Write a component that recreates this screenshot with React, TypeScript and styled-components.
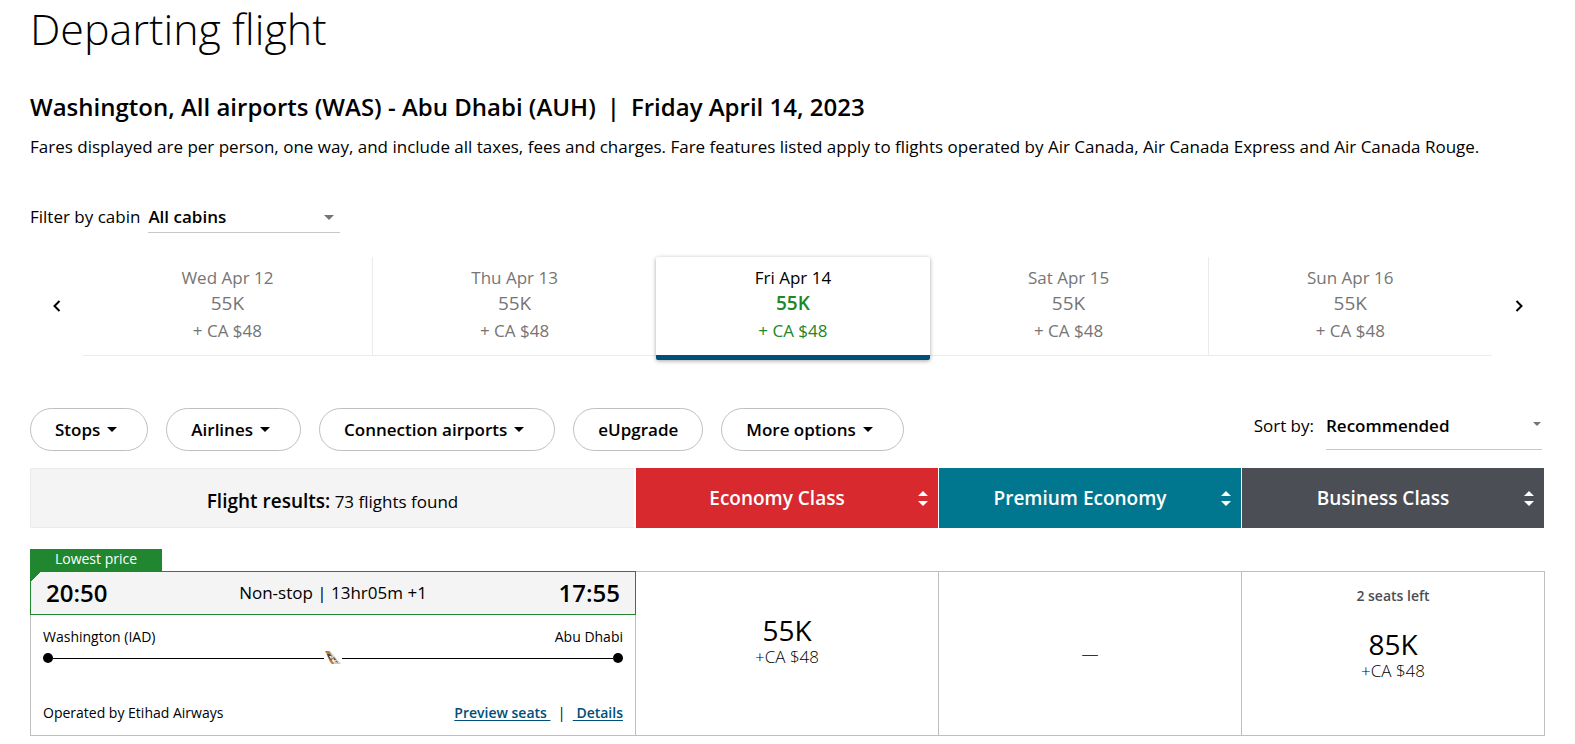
import React from "react";
import styled, { createGlobalStyle, css } from "styled-components";

const GlobalStyle = createGlobalStyle`
  *, *::before, *::after { box-sizing: border-box; }
  body {
    margin: 0;
    background: #fff;
    color: #000;
    font: 400 17px/24px "Open Sans", sans-serif;
  }
  button, select { font: inherit; color: inherit; }
`;

const Page = styled.main`
  padding: 0 30px 8px;
`;

const Title = styled.h1`
  margin: 0;
  font-size: 43px;
  line-height: 58px;
  font-weight: 300;
`;

const Route = styled.h2`
  margin: 33px 0 0;
  font-size: 24px;
  line-height: 32px;
  font-weight: 600;
`;

const RouteDivider = styled.span`
  margin: 0 11px;
`;

const Notice = styled.p`
  margin: 12px 0 0;
`;

const CabinFilter = styled.div`
  display: flex;
  align-items: flex-start;
  gap: 8px;
  margin-top: 46px;
`;

const SelectBox = styled.div<{ $width: number; $height: number }>`
  position: relative;
  width: ${(p) => p.$width}px;
  height: ${(p) => p.$height}px;
  border-bottom: 1px solid #c8c8c8;
`;

const Select = styled.select`
  display: block;
  width: 100%;
  height: 24px;
  padding: 0;
  border: 0;
  outline: 0;
  background: transparent;
  appearance: none;
  font-weight: 600;
`;

const SelectArrow = styled.svg<{ $top: number; $right: number }>`
  position: absolute;
  top: ${(p) => p.$top}px;
  right: ${(p) => p.$right}px;
  fill: #757575;
  pointer-events: none;
`;

const Calendar = styled.nav`
  display: flex;
  align-items: center;
  margin-top: 24px;
`;

const ArrowButton = styled.button`
  flex: none;
  display: flex;
  justify-content: center;
  width: 53px;
  padding: 8px 0 10px;
  border: 0;
  background: none;
`;

const Days = styled.div`
  flex: 1;
  display: flex;
  height: 99px;
  border-bottom: 1px solid #ebebeb;
`;

const Day = styled.button<{ $selected?: boolean; $divider?: boolean }>`
  flex: 1 1 auto;
  display: flex;
  flex-direction: column;
  align-items: center;
  height: 98px;
  padding: 8px 0 0;
  border: 0;
  border-right: ${(p) => (p.$divider ? "1px solid #ebebeb" : "0")};
  background: #fff;
  color: #757575;
  ${(p) =>
    p.$selected &&
    css`
      z-index: 1;
      height: 103px;
      border-bottom: 5px solid #004f7a;
      border-radius: 2px;
      box-shadow: 0 1px 4px rgba(0, 0, 0, 0.35);
      color: #218726;
    `}
`;

const DayName = styled.span<{ $selected?: boolean }>`
  line-height: 25px;
  ${(p) => p.$selected && "color: #000;"}
`;

const DayPoints = styled.span<{ $selected?: boolean }>`
  font-size: 19px;
  line-height: 27px;
  font-weight: ${(p) => (p.$selected ? 600 : 400)};
`;

const DayFee = styled.span`
  line-height: 27px;
`;

const Toolbar = styled.div`
  display: flex;
  justify-content: space-between;
  margin-top: 52px;
`;

const Pills = styled.div`
  display: flex;
  gap: 18px;
`;

const Pill = styled.button`
  display: flex;
  align-items: center;
  gap: 7px;
  height: 43px;
  padding: 0 24px;
  border: 1px solid #bfbfbf;
  border-radius: 22px;
  background: #fff;
  font-weight: 600;
`;

const PillArrow = styled.svg`
  margin-right: 6px;
`;

const Sort = styled.div`
  display: flex;
  gap: 12px;
  margin-right: 3px;
  padding-top: 6px;
`;

const Results = styled.table`
  width: 100%;
  margin-top: 17px;
  border-collapse: separate;
  border-spacing: 0;
  table-layout: fixed;
`;

const SummaryHead = styled.th`
  width: 40%;
  height: 60px;
  padding: 6px 0 0;
  border: 1px solid #ebebeb;
  border-right: 2px solid #fff;
  background: #f4f4f4;
  font-weight: 400;
`;

const SummaryLabel = styled.strong`
  font-size: 19px;
  font-weight: 600;
`;

const ClassHead = styled.th<{ $color: string }>`
  height: 60px;
  padding: 0;
  border-right: 1px solid #fff;
  background: ${(p) => p.$color};
  background-clip: padding-box;
`;

const ClassButton = styled.button`
  display: flex;
  align-items: center;
  width: 100%;
  height: 60px;
  padding: 0 10px 0 0;
  border: 0;
  background: none;
  color: #fff;
  font-size: 19px;
  font-weight: 600;
`;

const ClassName = styled.span`
  flex: 1;
`;

const BadgeCell = styled.td`
  height: 43px;
  padding: 0;
  vertical-align: bottom;
`;

const Badge = styled.div`
  width: 132px;
  height: 22px;
  background: #218630;
  color: #fff;
  font-size: 14px;
  line-height: 20px;
  text-align: center;
`;

const FlightCell = styled.td`
  height: 165px;
  padding: 0;
  border: solid #bfbfbf;
  border-width: 0 1px 1px;
  vertical-align: top;
`;

const Times = styled.div`
  display: flex;
  align-items: center;
  justify-content: space-between;
  height: 44px;
  margin: 0 -1px;
  padding: 0 15px;
  border: 1px solid #218630;
  background: linear-gradient(135deg, #218630 7px, #f4f4f4 7px);
`;

const Time = styled.strong`
  font-size: 24px;
  font-weight: 600;
`;

const FlightBody = styled.div`
  padding: 12px;
  font-size: 14px;
  line-height: 20px;
`;

const Between = styled.div`
  display: flex;
  justify-content: space-between;
`;

const Track = styled.div`
  display: flex;
  align-items: center;
  height: 14px;
  margin: 4px 0 38px;
`;

const Dot = styled.i`
  width: 10px;
  height: 10px;
  border-radius: 50%;
  background: #000;
`;

const Line = styled.i`
  flex: 1;
  height: 1px;
  background: #000;
`;

const Links = styled.span`
  white-space: pre;
`;

const Link = styled.a`
  color: #004f7a;
  font-weight: 600;
  text-underline-offset: 2px;
`;

const PriceCell = styled.td<{ $top: number }>`
  padding: ${(p) => p.$top}px 0 0;
  border: solid #bfbfbf;
  border-width: 1px 1px 1px 0;
  text-align: center;
  vertical-align: top;
`;

const EmptyCell = styled.td`
  padding: 0;
  border: solid #bfbfbf;
  border-width: 1px 1px 1px 0;
  color: #333;
  font-weight: 300;
  text-align: center;
`;

const SeatsLeft = styled.div`
  margin-bottom: 22px;
  color: #4b4e55;
  font-size: 14px;
  line-height: 20px;
  font-weight: 600;
`;

const Points = styled.div`
  margin-bottom: 1px;
  font-size: 28px;
  line-height: 32px;
`;

const Fee = styled.div`
  line-height: 20px;
  font-weight: 300;
`;

const Triangle = () => (
  <PillArrow width="10" height="5" viewBox="0 0 10 5" aria-hidden="true">
    <path d="M0 0h10L5 5z" />
  </PillArrow>
);

const Chevron = ({ flip }: { flip?: boolean }) => (
  <svg width="8" height="12" viewBox="0 0 8 12" fill="none" stroke="#000" strokeWidth="2" aria-hidden="true">
    <path d={flip ? "M1.500 1l5 5-5 5" : "M6.500 1l-5 5 5 5"} />
  </svg>
);

const SortIcon = () => (
  <svg width="10" height="17" viewBox="0 0 10 17" fill="#fff" aria-hidden="true">
    <path d="M0 6L5 1l5 5zM0 11h10l-5 5z" />
  </svg>
);

const TailLogo = () => (
  <svg width="18" height="14" viewBox="0 0 18 14" role="img" aria-label="Etihad Airways">
    <path d="M1 0h5l11 13H8C5 10 3 5 1 0z" fill="#d3ccc0" />
    <path d="M1 0h4l2 3-3 1zM4 6l3 2 3 5H8C6 11 5 9 4 6z" fill="#c07a22" />
    <path d="M3 3l3 0 2 2-1 1 2 2-2 1-3-3z" fill="#54403c" />
    <path d="M5 5l2 0 1 2-1 1z" fill="#efe9df" />
    <path d="M9 6l2 1 1 2-2-0zM11 10l2 0 1 2z" fill="#6b5648" />
    <path d="M8 8l2 1 1 2-2 0z" fill="#f4efe7" />
  </svg>
);

const days = ["Wed Apr 12", "Thu Apr 13", "Fri Apr 14", "Sat Apr 15", "Sun Apr 16"];
const SELECTED = 2;

const filters = [
  { label: "Stops", menu: true },
  { label: "Airlines", menu: true },
  { label: "Connection airports", menu: true },
  { label: "eUpgrade", menu: false },
  { label: "More options", menu: true },
];

const classes = [
  { name: "Economy Class", color: "#d8292f" },
  { name: "Premium Economy", color: "#00778f" },
  { name: "Business Class", color: "#4b4e55" },
];

export default function App() {
  return (
    <>
      <GlobalStyle />
      <Page>
        <Title>Departing flight</Title>
        <Route>
          Washington, All airports (WAS) - Abu Dhabi (AUH)
          <RouteDivider>|</RouteDivider>
          Friday April 14, 2023
        </Route>
        <Notice>
          Fares displayed are per person, one way, and include all taxes, fees and charges. Fare features listed apply
          to flights operated by Air Canada, Air Canada Express and Air Canada Rouge.
        </Notice>

        <CabinFilter>
          <label htmlFor="cabin">Filter by cabin</label>
          <SelectBox $width={192} $height={28}>
            <Select id="cabin">
              <option>All cabins</option>
            </Select>
            <SelectArrow $top={10} $right={6} width="10" height="5" viewBox="0 0 10 5">
              <path d="M0 0h10L5 5z" />
            </SelectArrow>
          </SelectBox>
        </CabinFilter>

        <Calendar aria-label="Departure dates">
          <ArrowButton aria-label="Previous dates">
            <Chevron />
          </ArrowButton>
          <Days>
            {days.map((day, i) => {
              const selected = i === SELECTED;
              return (
                <Day key={day} $selected={selected} $divider={i === 0 || i === 3}>
                  <DayName $selected={selected}>{day}</DayName>
                  <DayPoints $selected={selected}>55K</DayPoints>
                  <DayFee>+ CA $48</DayFee>
                </Day>
              );
            })}
          </Days>
          <ArrowButton aria-label="Next dates">
            <Chevron flip />
          </ArrowButton>
        </Calendar>

        <Toolbar>
          <Pills>
            {filters.map((f) => (
              <Pill key={f.label}>
                {f.label}
                {f.menu && <Triangle />}
              </Pill>
            ))}
          </Pills>
          <Sort>
            <label htmlFor="sort">Sort by:</label>
            <SelectBox $width={216} $height={36}>
              <Select id="sort">
                <option>Recommended</option>
              </Select>
              <SelectArrow $top={8} $right={1} width="8" height="4" viewBox="0 0 8 4">
                <path d="M0 0h8L4 4z" />
              </SelectArrow>
            </SelectBox>
          </Sort>
        </Toolbar>

        <Results>
          <thead>
            <tr>
              <SummaryHead>
                <SummaryLabel>Flight results:</SummaryLabel> 73 flights found
              </SummaryHead>
              {classes.map((c) => (
                <ClassHead key={c.name} $color={c.color}>
                  <ClassButton>
                    <ClassName>{c.name}</ClassName>
                    <SortIcon />
                  </ClassButton>
                </ClassHead>
              ))}
            </tr>
          </thead>
          <tbody>
            <tr>
              <BadgeCell colSpan={4}>
                <Badge>Lowest price</Badge>
              </BadgeCell>
            </tr>
            <tr>
              <FlightCell>
                <Times>
                  <Time>20:50</Time>
                  <span>Non-stop | 13hr05m +1</span>
                  <Time>17:55</Time>
                </Times>
                <FlightBody>
                  <Between>
                    <span>Washington (IAD)</span>
                    <span>Abu Dhabi</span>
                  </Between>
                  <Track>
                    <Dot />
                    <Line />
                    <TailLogo />
                    <Line />
                    <Dot />
                  </Track>
                  <Between>
                    <span>Operated by Etihad Airways</span>
                    <Links>
                      <Link href="#seats">{"Preview seats "}</Link>
                      {"  |  "}
                      <Link href="#details">{" Details"}</Link>
                    </Links>
                  </Between>
                </FlightBody>
              </FlightCell>
              <PriceCell $top={42}>
                <Points>55K</Points>
                <Fee>+CA $48</Fee>
              </PriceCell>
              <EmptyCell>—</EmptyCell>
              <PriceCell $top={14}>
                <SeatsLeft>2 seats left</SeatsLeft>
                <Points>85K</Points>
                <Fee>+CA $48</Fee>
              </PriceCell>
            </tr>
          </tbody>
        </Results>
      </Page>
    </>
  );
}
